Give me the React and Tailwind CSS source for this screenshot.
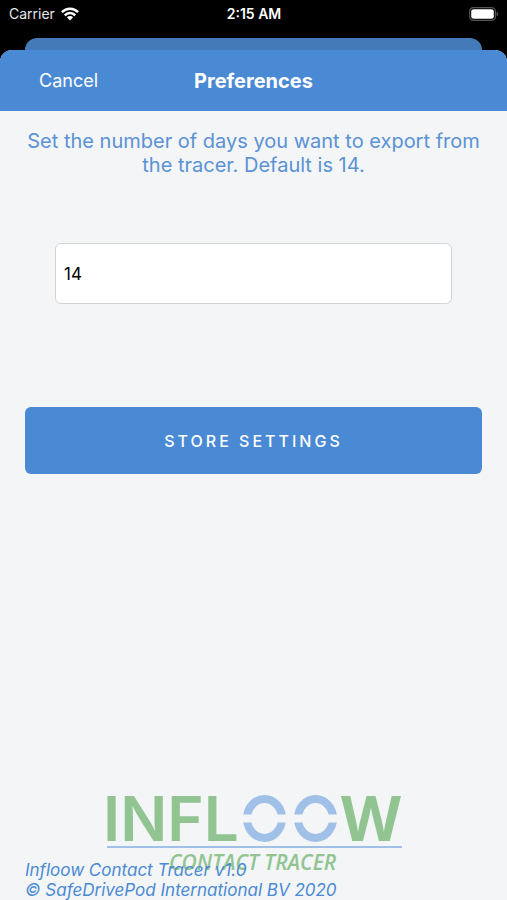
import React, { useState } from "react";

function WifiIcon() {
  return (
    <svg viewBox="0 0 18 14" className="w-[18px] h-[14px]" fill="none" stroke="white" strokeWidth="2.6" aria-hidden="true">
      <path d="M0.9 5.2C5.4 0.5 12.6 0.5 17.1 5.2" />
      <path d="M3.8 8.3C6.7 5.3 11.3 5.3 14.2 8.3" />
      <path d="M9 13.4L5.9 10.3C7.6 8.6 10.4 8.6 12.1 10.3Z" fill="white" stroke="none" />
    </svg>
  );
}

function BatteryIcon() {
  return (
    <svg viewBox="0 0 30 14" className="w-[30px] h-[14px]" aria-hidden="true">
      <rect x="0.6" y="0.6" width="25.8" height="12.8" rx="3.8" fill="none" stroke="#555" strokeWidth="1.2" />
      <rect x="2.2" y="2.2" width="22.6" height="9.6" rx="2.4" fill="white" />
      <path d="M27.6 4.8C29.8 5.6 29.8 8.4 27.6 9.2Z" fill="#555" />
    </svg>
  );
}

function Logo() {
  return (
    <svg
      viewBox="0 0 311 104"
      className="w-[311px] h-[104px]"
      role="img"
      aria-label="Infloow Contact Tracer"
    >
      <g fill="#92c492" fontFamily="'Open Sans', sans-serif">
        <text x="5" y="67" fontSize="62" fontWeight="600" fontFamily="Inter, sans-serif">
          INFL
        </text>
        <text x="243" y="67" fontSize="62" fontWeight="700">W</text>
        <text x="71" y="96" fontSize="21" fontWeight="600" fontStyle="italic">
          CONTACT TRACER
        </text>
      </g>
      <g fill="none" stroke="#a0c0e8" strokeWidth="8">
        <ellipse cx="166.500" cy="44.500" rx="17.500" ry="19.500" />
        <ellipse cx="217.500" cy="44.500" rx="17.500" ry="19.500" />
      </g>
      {/* gap through the middle of both rings */}
      <rect x="144" y="40.500" width="96" height="8" fill="#f3f5f7" />
      <rect x="9" y="72" width="295" height="2" fill="#a0c0e8" />
    </svg>
  );
}

export default function App() {
  const [days, setDays] = useState("14");

  return (
    <div className="min-h-screen flex flex-col bg-black font-[Inter,sans-serif]">
      <div className="grid grid-cols-3 items-center h-7 mb-2.5 pl-[9px] pr-2 text-sm text-white">
        <div className="flex items-center gap-1.5">
          <span className="text-gray-200">Carrier</span>
          <WifiIcon />
        </div>
        <span className="text-center font-semibold">2:15 AM</span>
        <div className="flex justify-end">
          <BatteryIcon />
        </div>
      </div>

      <div className="h-3 mx-[25px] rounded-t-xl bg-[#457ab8]" />

      <div className="flex-1 flex flex-col rounded-t-xl overflow-hidden bg-[#f3f5f7]">
        <header className="grid grid-cols-[1fr_auto_1fr] items-center h-[61px] px-[39px] bg-[#4a8ad4] text-white">
          <button type="button" className="justify-self-start text-lg">
            Cancel
          </button>
          <h1 className="text-xl font-bold">Preferences</h1>
        </header>

        <main className="flex-1 flex flex-col px-[25px] pt-[18px]">
          <label
            htmlFor="days"
            className="text-center text-xl leading-6 text-[#5a92d5]"
          >
            Set the number of days you want to export from the tracer. Default
            is 14.
          </label>
          <input
            id="days"
            type="text"
            inputMode="numeric"
            value={days}
            onChange={(e) => setDays(e.target.value)}
            className="h-[61px] mt-[66px] mx-[30px] px-2 rounded-md border border-[#d0d4d4] bg-white text-[17px] text-black"
          />
          <button
            type="button"
            className="h-[67px] mt-[103px] rounded-md bg-[#4a8ad4] text-base font-medium tracking-[3px] text-white"
          >
            STORE SETTINGS
          </button>
        </main>

        <footer className="relative flex justify-center pb-[22px]">
          <Logo />
          <p className="absolute bottom-0 left-[25px] text-[17px] leading-5 italic text-[#4a8ad4]">
            Infloow Contact Tracer v1.0
            <br />© SafeDrivePod International BV 2020
          </p>
        </footer>
      </div>
    </div>
  );
}
